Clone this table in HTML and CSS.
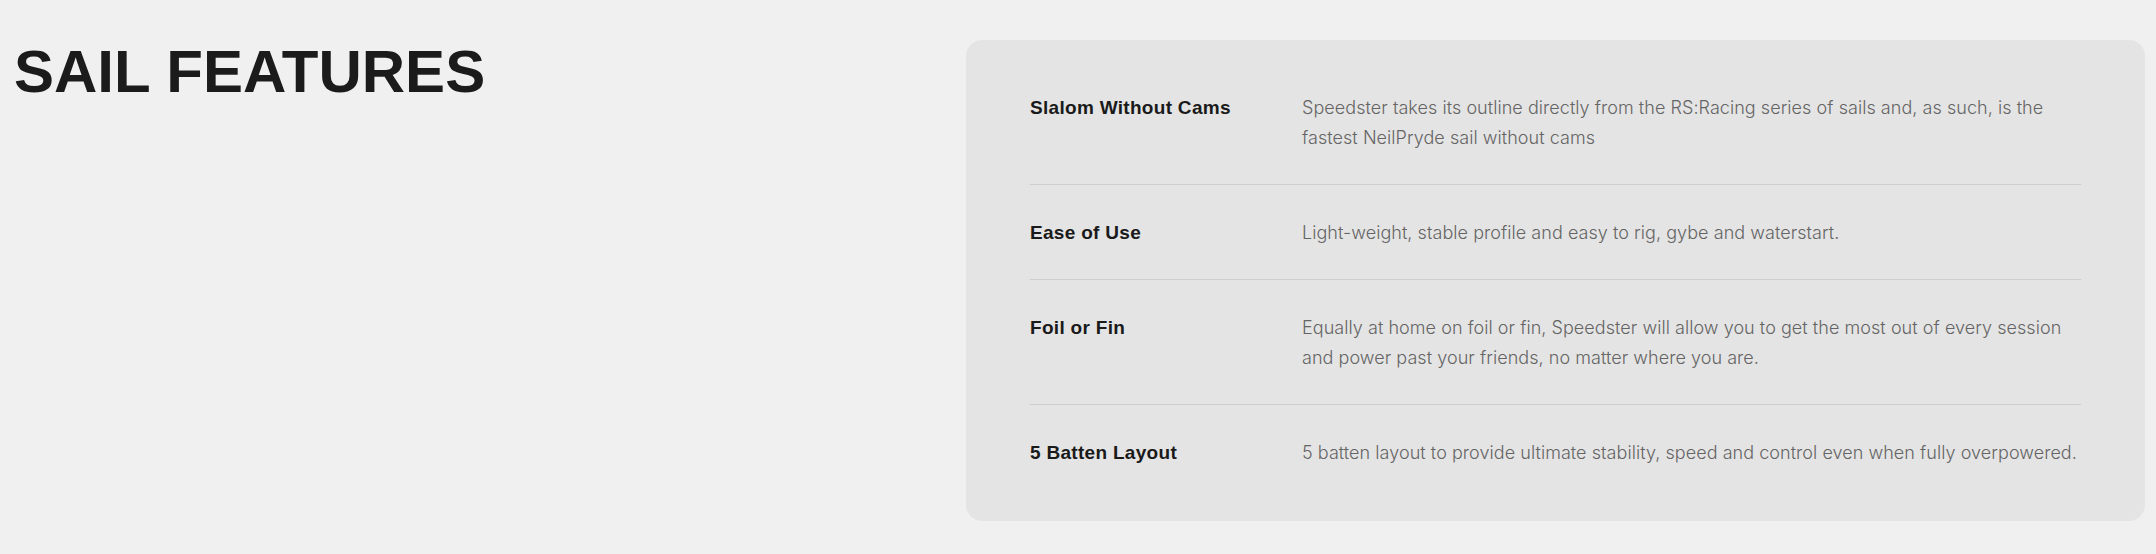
FILE: index.html
```html
<!DOCTYPE html>
<html lang="en">
<head>
<meta charset="utf-8">
<title>Sail Features</title>
<link rel="stylesheet" href="styles.css">
</head>
<body>
<section class="features">
  <div class="features-intro">
    <h2 class="features-title">SAIL FEATURES</h2>
  </div>
  <div class="features-panel">
    <div class="feature-row">
      <div class="feature-name">Slalom Without Cams</div>
      <div class="feature-desc">Speedster takes its outline directly from the RS:Racing series of sails and, as such, is the fastest NeilPryde sail without cams</div>
    </div>
    <div class="feature-row">
      <div class="feature-name">Ease of Use</div>
      <div class="feature-desc">Light-weight, stable profile and easy to rig, gybe and waterstart.</div>
    </div>
    <div class="feature-row">
      <div class="feature-name">Foil or Fin</div>
      <div class="feature-desc">Equally at home on foil or fin, Speedster will allow you to get the most out of every session and power past your friends, no matter where you are.</div>
    </div>
    <div class="feature-row">
      <div class="feature-name">5 Batten Layout</div>
      <div class="feature-desc">5 batten layout to provide ultimate stability, speed and control even when fully overpowered.</div>
    </div>
  </div>
</section>
</body>
</html>
```

FILE: styles.css
```css
* {
  box-sizing: border-box;
}

html, body {
  margin: 0;
  padding: 0;
  background: #f0f0f0;
}

body {
  font-family: Inter, "Liberation Sans", Arial, sans-serif;
  color: #1b1b1b;
}

.features {
  display: grid;
  grid-template-columns: 1fr 1179px;
  padding: 40px 11px 33px 11px;
}

.features-intro {
  padding: 2px 0 0 3px;
}

.features-title {
  margin: 0;
  font-family: "Liberation Sans", Arial, sans-serif;
  font-weight: 700;
  font-size: 60px;
  line-height: 1;
  letter-spacing: 0;
  color: #1b1b1b;
}

.features-panel {
  background: #e4e4e4;
  border-radius: 16px;
  padding: 20px 64px 22px 64px;
}

.feature-row {
  display: grid;
  grid-template-columns: 272px 1fr;
  padding: 33px 0 31px 0;
  border-bottom: 1px solid #cdcdcd;
}

.feature-row:last-child {
  border-bottom: none;
}

.feature-name {
  font-family: "Liberation Sans", Arial, sans-serif;
  font-weight: 700;
  font-size: 19px;
  letter-spacing: 0.3px;
  line-height: 30px;
  color: #1a1a1a;
}

.feature-desc {
  font-weight: 300;
  font-size: 18px;
  letter-spacing: 0.05px;
  line-height: 30px;
  color: #656565;
}
```
